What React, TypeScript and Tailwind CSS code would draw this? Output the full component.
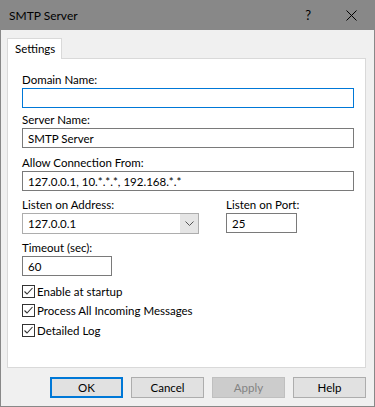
import { useState } from "react";

function Field({ label, value, focused, className = "" }: { label: string; value: string; focused?: boolean; className?: string }) {
    return (
        <div className={className}>
            <div className="h-[15px] leading-[15px] mb-px whitespace-nowrap">{label}</div>
            <div
                className={`h-[20px] bg-white border flex items-center pl-[5px] leading-[15px] ${
                    focused ? "border-[#0078d7]" : "border-[#7a7a7a]"
                }`}
            >
                {value}
            </div>
        </div>
    );
}

function Check({ label, className = "" }: { label: string; className?: string }) {
    const [on, setOn] = useState(true);
    return (
        <div className={`flex items-center h-[13px] ${className}`} onClick={() => setOn(!on)}>
            <div className="w-[13px] h-[13px] border border-[#333333] bg-white flex items-center justify-center">
                {on && (
                    <svg width="11" height="11" viewBox="0 0 11 11">
                        <polyline points="1.5,5.5 4,8 9.5,2" fill="none" stroke="#333333" strokeWidth="1.1" />
                    </svg>
                )}
            </div>
            <span className="ml-[2px] leading-[15px]">{label}</span>
        </div>
    );
}

function Button({ children, primary, disabled }: { children: string; primary?: boolean; disabled?: boolean }) {
    let cls = "bg-[#e1e1e1] border border-[#adadad] text-black";
    if (primary) cls = "bg-[#e1e1e1] border-2 border-[#0078d7] text-black";
    if (disabled) cls = "bg-[#cccccc] border border-[#bfbfbf] text-[#838383]";
    return <div className={`w-[73px] h-[21px] flex items-center justify-center leading-[15px] ${cls}`}>{children}</div>;
}

export default function App() {
    return (
        <div
            className="w-[375px] h-[407px] flex flex-col border-x border-b border-[#888888] bg-[#f0f0f0] text-[11.5px] text-black overflow-hidden"
            style={{ fontFamily: "Lato, 'Liberation Sans', sans-serif" }}
        >
            <header className="h-[30px] bg-[#888888] flex items-center pl-[8px] shrink-0">
                <span className="text-[12px] leading-[15px]">SMTP Server</span>
                <span className="ml-auto mr-[35px] text-[13px] leading-[15px]">?</span>
                <svg width="11" height="11" viewBox="0 0 11 11" className="mr-[17px]">
                    <path d="M0.5 0.5 L10.5 10.5 M10.5 0.5 L0.5 10.5" stroke="#000" strokeWidth="1" />
                </svg>
            </header>
            <main className="flex-1 flex flex-col pt-[8px] pl-[6px] pr-[8px] pb-[8px]">
                <div className="flex">
                    <div className="relative z-10 h-[21px] w-[55px] bg-white border-x border-t border-[#d9d9d9] pl-[7px] pt-[2px] leading-[15px]">
                        Settings
                    </div>
                </div>
                <div className="flex-1 -mt-px bg-white border border-[#d9d9d9] pl-[14px] pr-[11px] pt-[13px]">
                    <Field label="Domain Name:" value="" focused />
                    <Field label="Server Name:" value="SMTP Server" className="mt-[4px]" />
                    <Field label="Allow Connection From:" value="127.0.0.1, 10.*.*.*, 192.168.*.*" className="mt-[7px]" />
                    <div className="flex mt-[6px]">
                        <div className="w-[177px]">
                            <div className="h-[15px] leading-[15px] mb-px">Listen on Address:</div>
                            <div className="h-[21px] bg-white border border-[#adadad] flex">
                                <div className="flex-1 flex items-center pl-[5px] leading-[15px]">127.0.0.1</div>
                                <div className="w-[18px] bg-[#e5e5e5] flex items-center justify-center">
                                    <svg width="9" height="5" viewBox="0 0 9 5">
                                        <polyline points="0.5,0.5 4.5,4.5 8.5,0.5" fill="none" stroke="#555555" strokeWidth="1" />
                                    </svg>
                                </div>
                            </div>
                        </div>
                        <Field label="Listen on Port:" value="25" className="ml-[27px] w-[71px]" />
                    </div>
                    <Field label="Timeout (sec):" value="60" className="mt-[6px] w-[90px]" />
                    <Check label="Enable at startup" className="mt-[9px]" />
                    <Check label="Process All Incoming Messages" className="mt-[6px]" />
                    <Check label="Detailed Log" className="mt-[7px]" />
                </div>
                <div className="flex justify-end gap-[8px] mt-[9px]">
                    <Button primary>OK</Button>
                    <Button>Cancel</Button>
                    <Button disabled>Apply</Button>
                    <Button>Help</Button>
                </div>
            </main>
        </div>
    );
}
